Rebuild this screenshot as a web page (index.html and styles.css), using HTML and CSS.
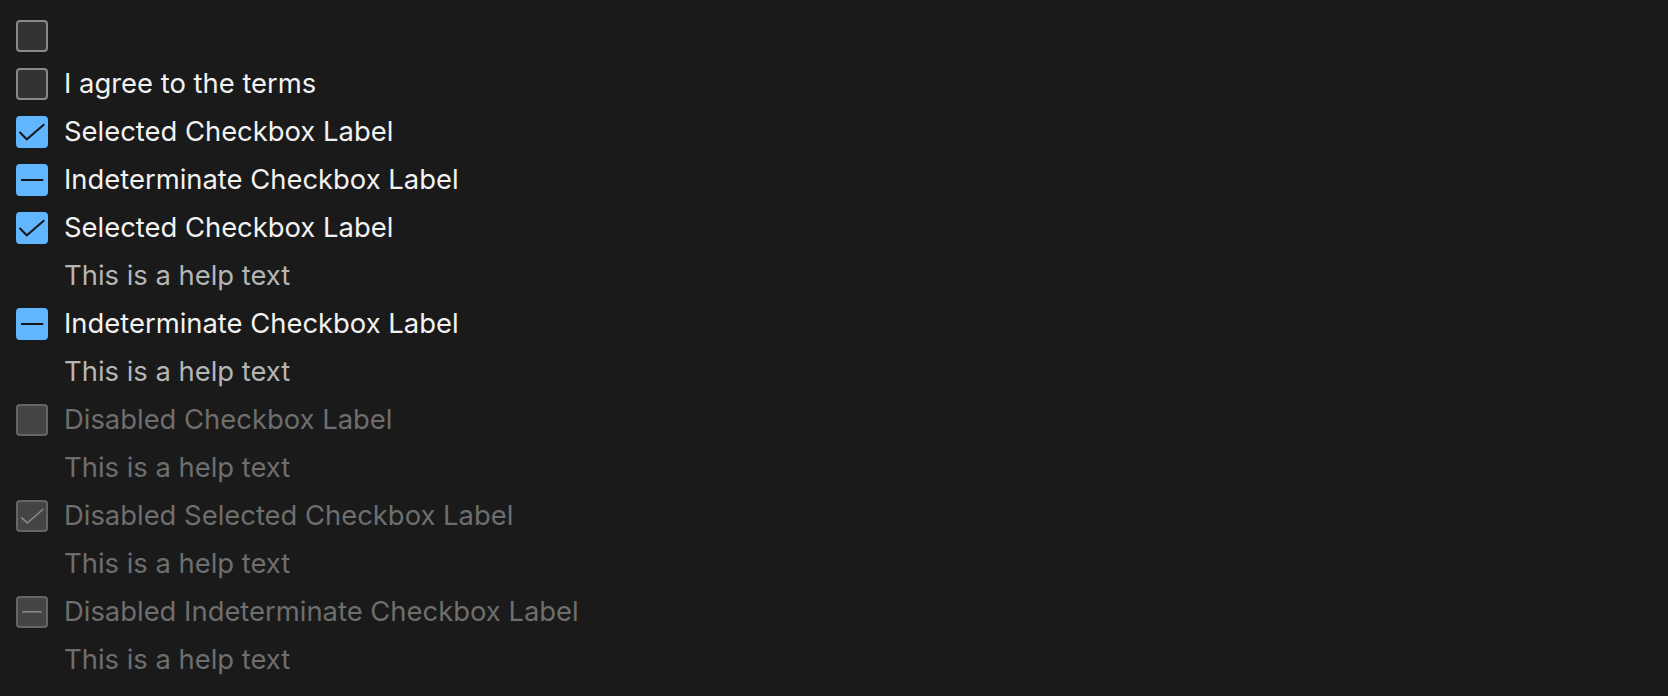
FILE: index.html
```html
<!DOCTYPE html>
<html lang="en">
<head>
<meta charset="utf-8">
<title>Checkboxes</title>
<link rel="stylesheet" href="styles.css">
</head>
<body>
<div class="list">
  <div class="item">
    <label class="cb-row"><span class="box"></span></label>
  </div>
  <div class="item">
    <label class="cb-row"><span class="box"></span><span class="label">I agree to the terms</span></label>
  </div>
  <div class="item">
    <label class="cb-row"><span class="box checked"><svg viewBox="0 0 32 32" class="mark"><path d="M3.5 16 L10.8 23.3 L28.3 8.2"/></svg></span><span class="label">Selected Checkbox Label</span></label>
  </div>
  <div class="item">
    <label class="cb-row"><span class="box checked"><svg viewBox="0 0 32 32" class="mark"><path d="M5 16 H27.3"/></svg></span><span class="label">Indeterminate Checkbox Label</span></label>
  </div>
  <div class="item">
    <label class="cb-row"><span class="box checked"><svg viewBox="0 0 32 32" class="mark"><path d="M3.5 16 L10.8 23.3 L28.3 8.2"/></svg></span><span class="label">Selected Checkbox Label</span></label>
    <div class="help">This is a help text</div>
  </div>
  <div class="item">
    <label class="cb-row"><span class="box checked"><svg viewBox="0 0 32 32" class="mark"><path d="M5 16 H27.3"/></svg></span><span class="label">Indeterminate Checkbox Label</span></label>
    <div class="help">This is a help text</div>
  </div>
  <div class="item disabled">
    <label class="cb-row"><span class="box"></span><span class="label">Disabled Checkbox Label</span></label>
    <div class="help">This is a help text</div>
  </div>
  <div class="item disabled">
    <label class="cb-row"><span class="box"><svg viewBox="0 0 32 32" class="mark"><path d="M5.3 17.3 L11.3 23 L27.3 9"/></svg></span><span class="label">Disabled Selected Checkbox Label</span></label>
    <div class="help">This is a help text</div>
  </div>
  <div class="item disabled">
    <label class="cb-row"><span class="box"><svg viewBox="0 0 32 32" class="mark"><path d="M6.3 15.8 H25.5"/></svg></span><span class="label">Disabled Indeterminate Checkbox Label</span></label>
    <div class="help">This is a help text</div>
  </div>
</div>
</body>
</html>
```
FILE: styles.css
```css
html, body {
  margin: 0;
  background: #1a1a1a;
}
body {
  font-family: Inter, "Noto Sans", sans-serif;
  font-size: 27.4px;
  color: #f2f2f2;
  padding: 20px 16px;
}
.list {
  display: flex;
  flex-direction: column;
  gap: 16px;
}
.item {
  display: flex;
  flex-direction: column;
  gap: 16px;
}
.cb-row {
  display: flex;
  align-items: center;
  gap: 16px;
  height: 32px;
}
.box {
  box-sizing: border-box;
  width: 32px;
  height: 32px;
  flex: none;
  border: 2px solid #8a8a8a;
  border-radius: 4px;
  background: #333333;
  position: relative;
}
.box.checked {
  border-color: #62b5ff;
  background: #62b5ff;
}
.mark {
  position: absolute;
  left: -2px;
  top: -2px;
  width: 32px;
  height: 32px;
  fill: none;
  stroke: #161616;
  stroke-width: 2;
}
.label {
  line-height: 30px;
  padding-bottom: 2px;
}
.help {
  line-height: 30px;
  padding-bottom: 2px;
  margin-left: 48px;
  color: #b5b5b5;
}
.disabled .box {
  background: #444444;
  border-color: #666666;
}
.disabled .mark {
  stroke: #8a8a8a;
  stroke-width: 1.6;
}
.disabled .label,
.disabled .help {
  color: #6e6e6e;
}
```
